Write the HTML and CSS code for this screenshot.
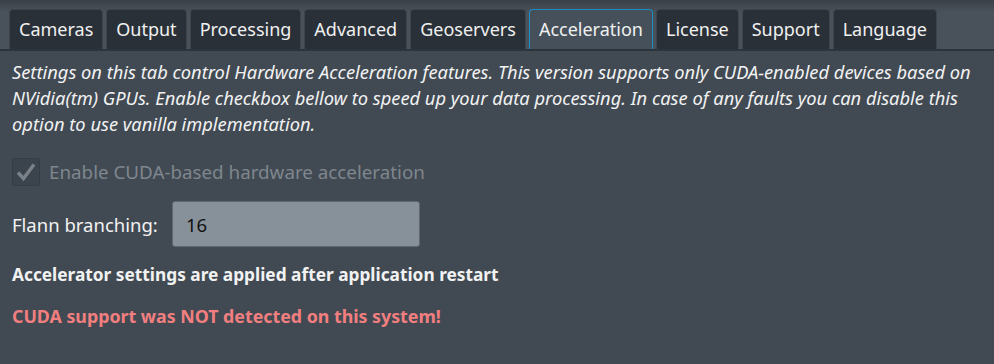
FILE: index.html
```html
<!DOCTYPE html>
<html lang="en">
<head>
    <meta charset="UTF-8">
    <title>Settings - Acceleration</title>
    <link rel="stylesheet" href="styles.css">
</head>
<body>
    <div class="tabbar">
        <div class="tab">Cameras</div>
        <div class="tab">Output</div>
        <div class="tab">Processing</div>
        <div class="tab">Advanced</div>
        <div class="tab">Geoservers</div>
        <div class="tab active">Acceleration</div>
        <div class="tab">License</div>
        <div class="tab">Support</div>
        <div class="tab">Language</div>
    </div>

    <div class="panel">
        <p class="about">Settings on this tab control Hardware Acceleration features. This version supports only CUDA-enabled devices based on NVidia(tm) GPUs. Enable checkbox bellow to speed up your data processing. In case of any faults you can disable this option to use vanilla implementation.</p>

        <div class="check-row">
            <span class="checkbox">
                <svg width="22" height="22" viewBox="0 0 22 22">
                    <path d="M3 11.5 L8.5 17.5 L19 3.5" fill="none" stroke="#7b8189" stroke-width="3.4"/>
                </svg>
            </span>
            <span class="check-label">Enable CUDA-based hardware acceleration</span>
        </div>

        <div class="field-row">
            <label for="branching">Flann branching:</label>
            <input type="text" id="branching" value="16">
        </div>

        <p class="note">Accelerator settings are applied after application restart</p>
        <p class="warning">CUDA support was NOT detected on this system!</p>
    </div>
</body>
</html>
```

FILE: styles.css
```css
* {
    box-sizing: border-box;
}
body {
    margin: 0;
    background-color: #414a53;
    color: #f2f2f2;
    font-family: 'Noto Sans', 'Open Sans', sans-serif;
}
.tabbar {
    display: flex;
    gap: 3px;
    padding: 9px 0 0 9px;
    background: linear-gradient(#394048, #49515a 12px);
    border-bottom: 2px solid #2d333a;
}
.tab {
    height: 40px;
    line-height: 39px;
    padding: 0 9px;
    font-size: 18px;
    color: #f0f0f0;
    background-color: #2a3038;
    border: 1px solid #3d444c;
    border-bottom: none;
    border-radius: 4px 4px 0 0;
}
.tab.active {
    background-color: #46505a;
    border: 1px solid #1b8ec4;
    border-bottom: none;
}
.panel {
    padding: 8px 12px 0 12px;
}
.about {
    margin: 0;
    font-size: 18.3px;
    line-height: 26px;
    font-style: italic;
}
.check-row {
    display: flex;
    align-items: center;
    gap: 9px;
    margin-top: 21px;
}
.checkbox {
    width: 28px;
    height: 28px;
    display: flex;
    align-items: center;
    justify-content: center;
    background-color: #3b434c;
    border: 1px solid #353c44;
    border-radius: 3px;
}
.check-label {
    font-size: 18.8px;
    color: #7f868d;
}
.field-row {
    display: flex;
    align-items: center;
    margin-top: 15px;
}
.field-row label {
    font-size: 18.5px;
    width: 160px;
}
.field-row input {
    width: 248px;
    height: 46px;
    padding: 0 13px;
    font-family: inherit;
    font-size: 18.5px;
    color: #111;
    background-color: #87919a;
    border: 1px solid #5f6770;
    border-radius: 3px;
}
.note {
    margin: 16px 0 0 0;
    font-size: 17.3px;
    line-height: 24px;
    font-weight: bold;
}
.warning {
    margin: 17px 0 0 0;
    font-size: 17.8px;
    line-height: 24px;
    font-weight: bold;
    color: #f27f7f;
}
```
